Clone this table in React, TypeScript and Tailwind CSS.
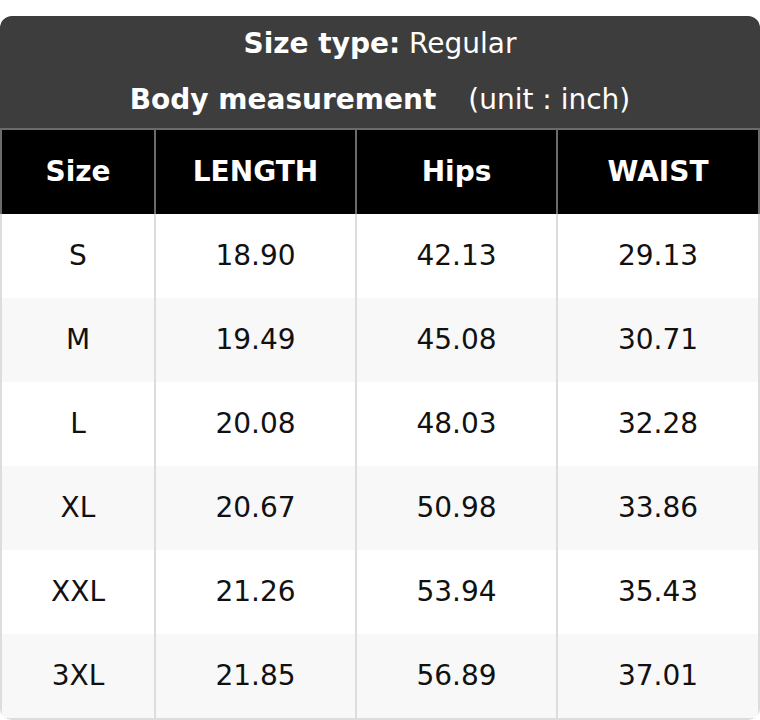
const rows = [
  { size: "S", length: "18.90", hips: "42.13", waist: "29.13" },
  { size: "M", length: "19.49", hips: "45.08", waist: "30.71" },
  { size: "L", length: "20.08", hips: "48.03", waist: "32.28" },
  { size: "XL", length: "20.67", hips: "50.98", waist: "33.86" },
  { size: "XXL", length: "21.26", hips: "53.94", waist: "35.43" },
  { size: "3XL", length: "21.85", hips: "56.89", waist: "37.01" },
];

const headers = ["Size", "LENGTH", "Hips", "WAIST"];

export default function App() {
  return (
    <div className="w-[760px] bg-white pt-4 font-['DejaVu_Sans',sans-serif] text-[28px]">
      <div className="overflow-hidden rounded-xl">
        {/* Caption */}
        <div className="flex h-[112px] flex-col bg-[#3d3d3d] text-white">
          <div className="flex h-[56px] items-center justify-center">
            <span className="font-bold">Size type:</span>
            <span>&nbsp;Regular</span>
          </div>
          <div className="flex h-[56px] items-center justify-center">
            <span className="font-bold">Body measurement</span>
            <span className="ml-[32px]">(unit : inch)</span>
          </div>
        </div>
        <div className="h-[2px] bg-[#6b6b6b]" />

        {/* Header row */}
        <div className="grid h-[84px] grid-cols-[154px_201px_201px_1fr] bg-black text-white">
          {headers.map((h, i) => (
            <div
              key={h}
              className={`flex items-center justify-center border-l-2 border-[#6b6b6b] font-bold ${
                i === 3 ? "border-r-2" : ""
              }`}
            >
              {h}
            </div>
          ))}
        </div>

        {/* Body */}
        <div className="rounded-b-xl border-b-2 border-[#dddddd] text-[#111111]">
          {rows.map((r, idx) => (
            <div
              key={r.size}
              className={`grid h-[84px] grid-cols-[154px_201px_201px_1fr] ${
                idx % 2 === 1 ? "bg-[#f8f8f8]" : "bg-white"
              }`}
            >
              <div className="flex items-center justify-center border-l-2 border-[#dddddd]">{r.size}</div>
              <div className="flex items-center justify-center border-l-2 border-[#dddddd]">{r.length}</div>
              <div className="flex items-center justify-center border-l-2 border-[#dddddd]">{r.hips}</div>
              <div className="flex items-center justify-center border-x-2 border-[#dddddd]">{r.waist}</div>
            </div>
          ))}
        </div>
      </div>
    </div>
  );
}
